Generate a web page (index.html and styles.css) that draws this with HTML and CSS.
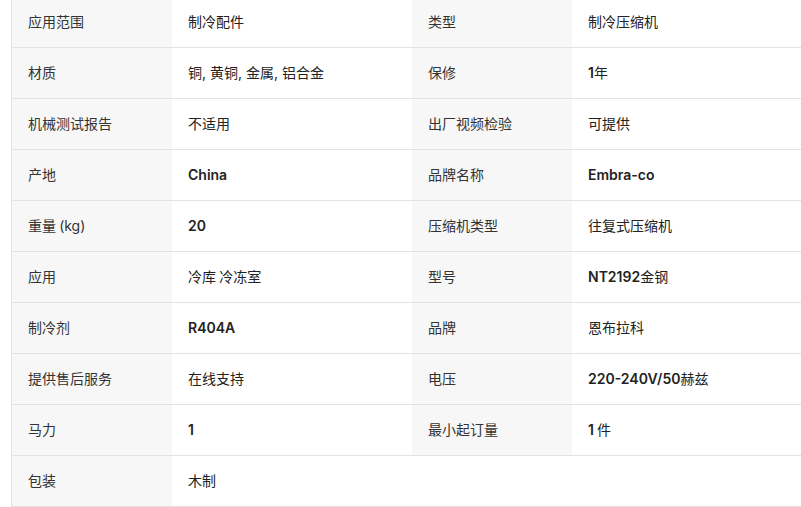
FILE: index.html
```html
<!DOCTYPE html>
<html lang="zh-CN">
<head>
<meta charset="utf-8">
<link rel="stylesheet" href="styles.css">
</head>
<body>
<div class="wrap">
<table class="specs">
  <tr><th>应用范围</th><td>制冷配件</td><th>类型</th><td>制冷压缩机</td></tr>
  <tr><th>材质</th><td><span class="lat">铜, 黄铜, 金属, 铝合金</span></td><th>保修</th><td><span class="lat b">1</span>年</td></tr>
  <tr><th>机械测试报告</th><td>不适用</td><th>出厂视频检验</th><td>可提供</td></tr>
  <tr><th>产地</th><td><span class="lat b">China</span></td><th>品牌名称</th><td><span class="lat b">Embra-co</span></td></tr>
  <tr><th>重量 <span class="lat">(kg)</span></th><td><span class="lat b">20</span></td><th>压缩机类型</th><td>往复式压缩机</td></tr>
  <tr><th>应用</th><td>冷库 冷冻室</td><th>型号</th><td><span class="lat b">NT2192</span>金钢</td></tr>
  <tr><th>制冷剂</th><td><span class="lat b">R404A</span></td><th>品牌</th><td>恩布拉科</td></tr>
  <tr><th>提供售后服务</th><td>在线支持</td><th>电压</th><td><span class="lat b">220-240V/50</span>赫兹</td></tr>
  <tr><th>马力</th><td><span class="lat b">1</span></td><th>最小起订量</th><td><span class="lat b">1</span> 件</td></tr>
  <tr><th>包装</th><td>木制</td><td class="empty"></td><td class="empty"></td></tr>
</table>
</div>
</body>
</html>
```
FILE: styles.css
```css
html, body {
  margin: 0;
  padding: 0;
  background: #ffffff;
  overflow: hidden;
}
.wrap {
  margin-top: -4px;
  padding-left: 11px;
}
.specs {
  border-collapse: collapse;
  table-layout: fixed;
  width: 801px;
  border-left: 1px solid #e2e2e2;
  font-family: "Noto Sans CJK SC", "Microsoft YaHei", sans-serif;
  font-size: 14px;
}
.specs th, .specs td {
  height: 48px;
  padding: 0 16px 2px;
  border: none;
  border-top: 1px solid #e2e2e2;
  border-bottom: 1px solid #e2e2e2;
  text-align: left;
  vertical-align: middle;
  font-weight: 400;
  white-space: nowrap;
  line-height: 20px;
}
.specs th {
  width: 128px;
  background: #f7f7f7;
  color: #333333;
}
.specs td {
  width: 208px;
  background: #ffffff;
  color: #222222;
}
.specs td.empty {
  background: #ffffff;
}
.lat {
  font-family: Inter, "Noto Sans CJK SC", sans-serif;
}
.lat.b {
  font-weight: 600;
}
```
